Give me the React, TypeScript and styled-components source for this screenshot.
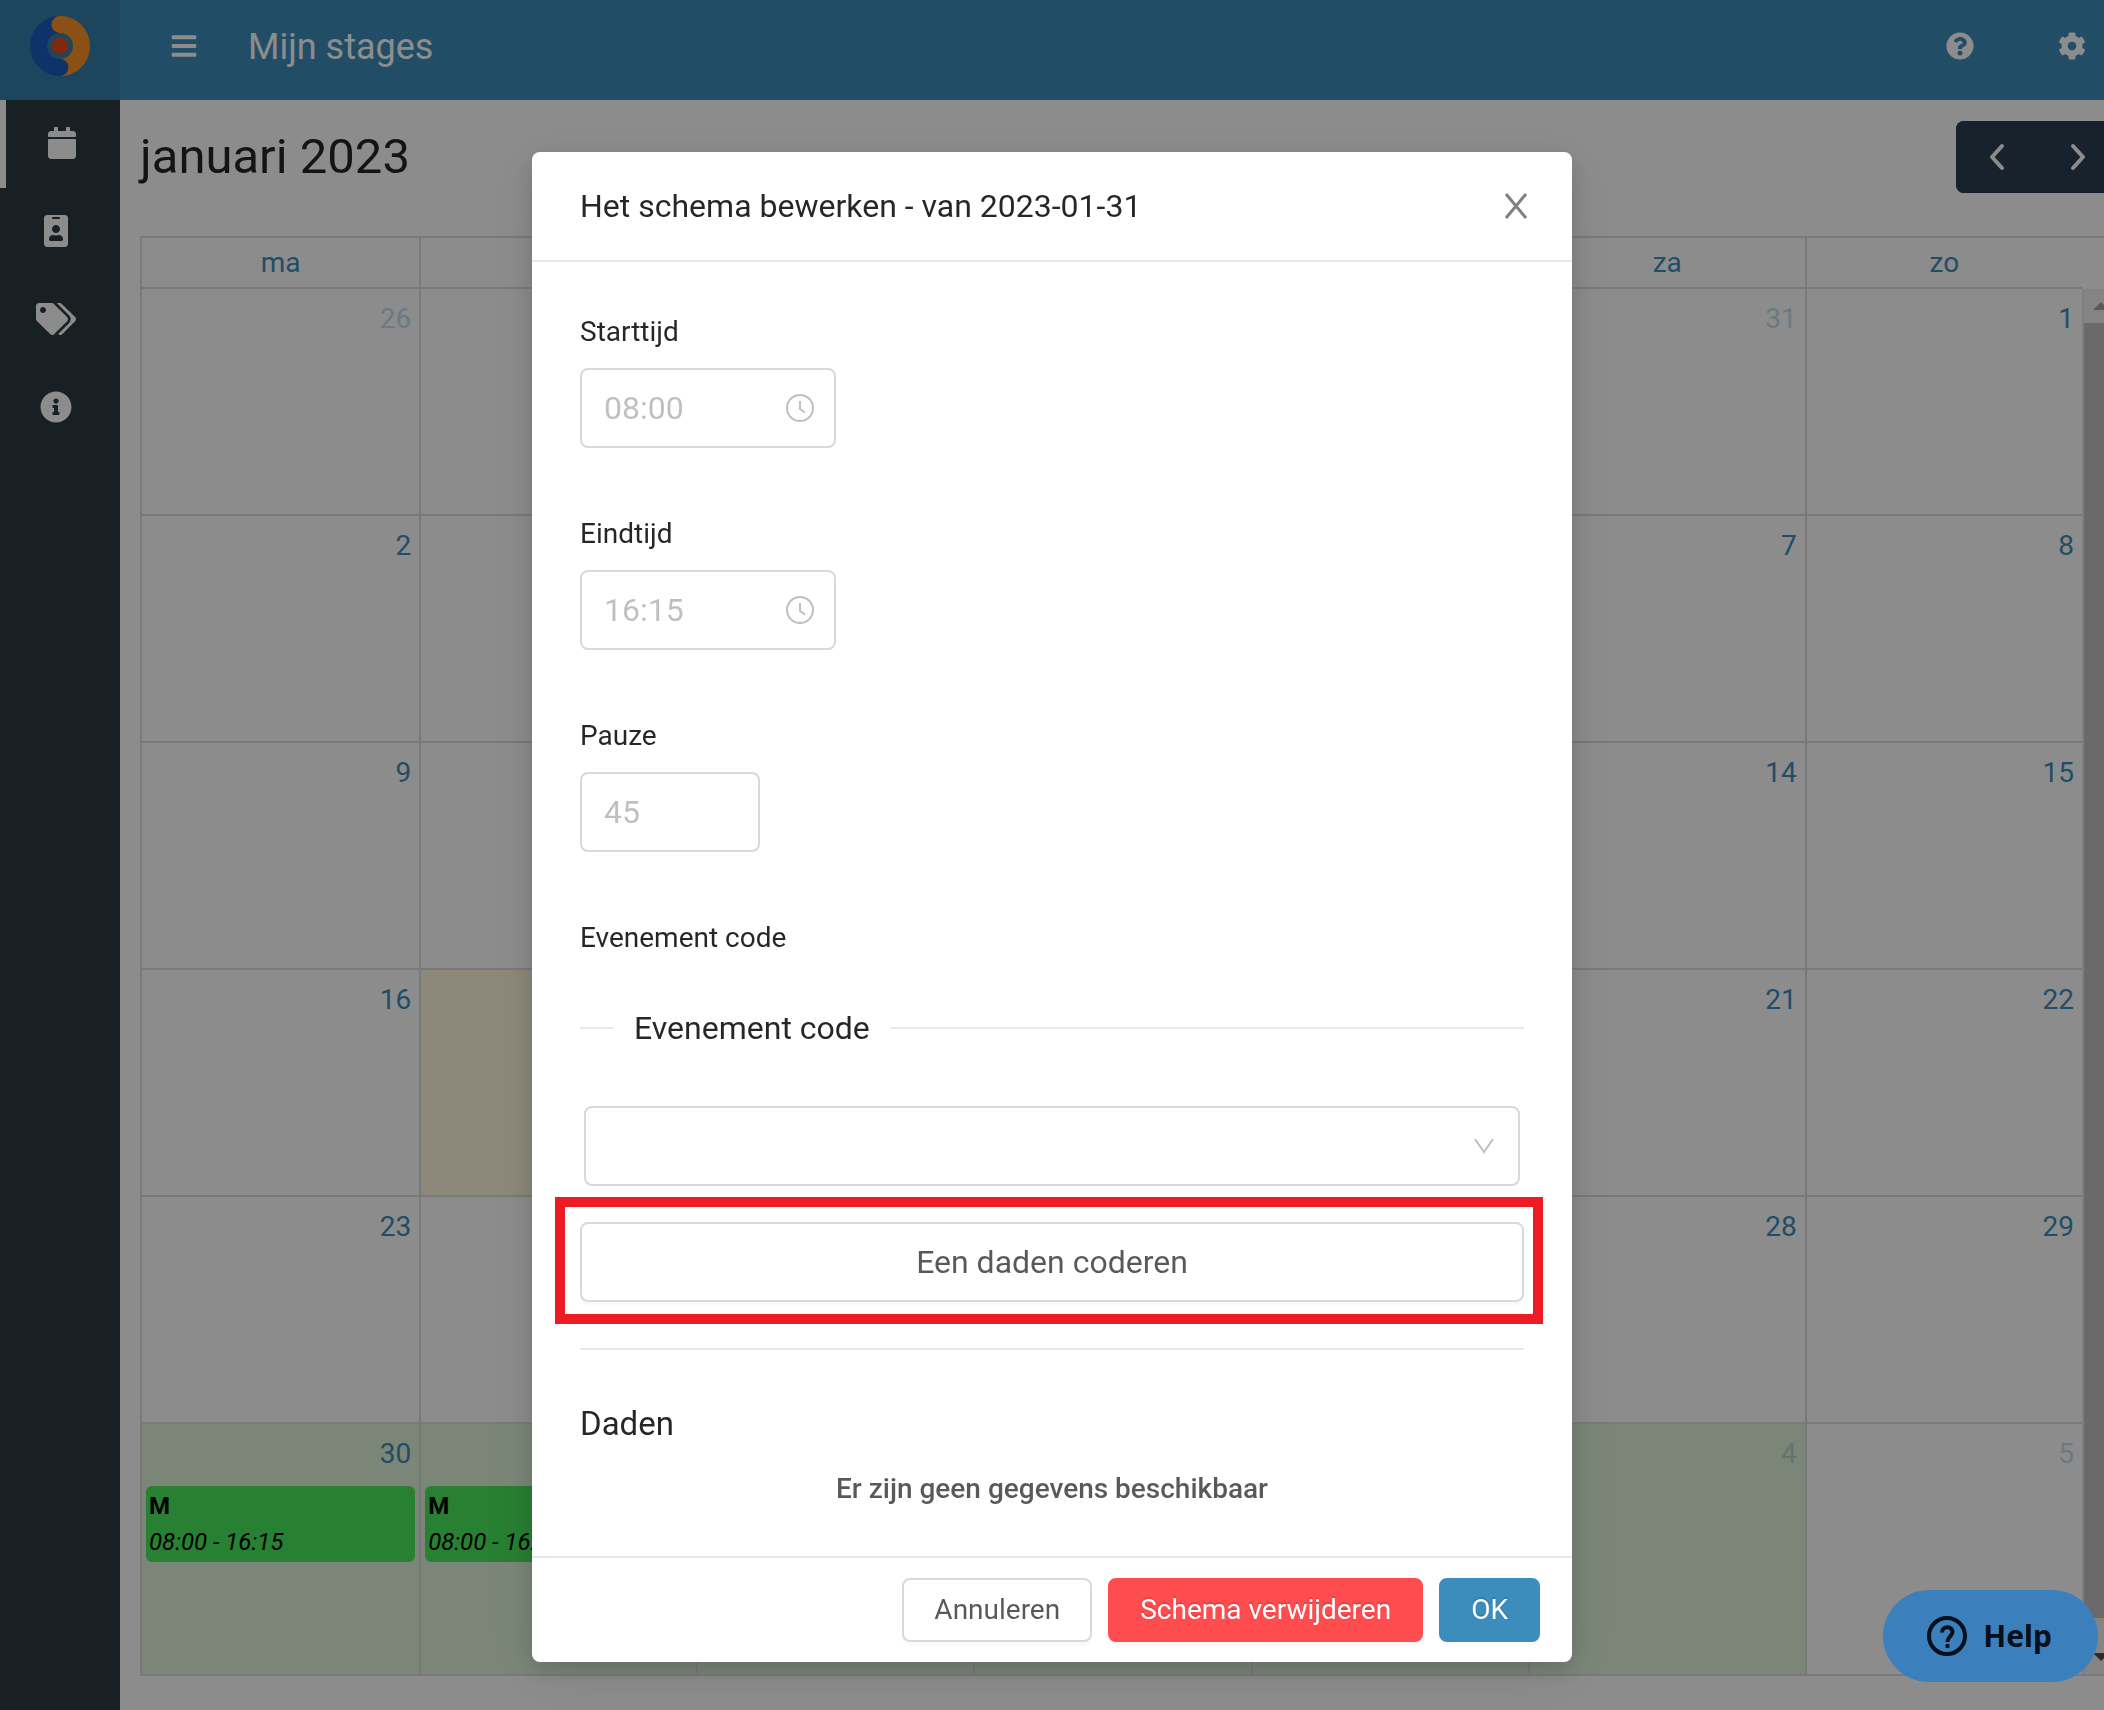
import React from 'react';
import styled, { createGlobalStyle } from 'styled-components';
import {
  FaBars,
  FaCalendar,
  FaCog,
  FaIdBadge,
  FaInfoCircle,
  FaQuestionCircle,
  FaTags,
} from 'react-icons/fa';

const GlobalStyle = createGlobalStyle`
  *, *::before, *::after { box-sizing: border-box; }
  html, body, #root { height: 100%; }
  body {
    margin: 0;
    overflow: hidden;
    background: #fff;
    color: rgba(0, 0, 0, 0.85);
    font-family: Roboto, "Liberation Sans", sans-serif;
    font-size: 28px;
    line-height: 42px;
  }
  button, input, select { font: inherit; color: inherit; margin: 0; }
  button { cursor: pointer; }
  a { text-decoration: none; color: inherit; }
`;

const Page = styled.div`
  display: flex;
  flex-direction: column;
  height: 100vh;
  overflow: hidden;
`;

const TopBar = styled.header`
  display: flex;
  align-items: center;
  flex: none;
  height: 100px;
  padding-right: 18px;
  background: #3c8dbc;
  color: #fff;
`;

const LogoCell = styled.a`
  display: flex;
  align-items: center;
  justify-content: center;
  width: 120px;
  height: 100%;
  padding-bottom: 8px;
  background: #367fa9;
`;

const IconButton = styled.button`
  display: flex;
  padding: 0;
  border: 0;
  background: none;
  color: #fff;
  font-size: 28px;
`;

const MenuSlot = styled.div`
  padding: 0 50px 8px;
`;

const PageTitle = styled.h1`
  flex: 1;
  margin: 0;
  padding-bottom: 6px;
  font-size: 36px;
  font-weight: 400;
`;

const TopActions = styled.div`
  display: flex;
  gap: 84px;
  padding-bottom: 8px;
`;

const Body = styled.div`
  display: flex;
  flex: 1;
  min-height: 0;
`;

const Sidebar = styled.nav`
  display: flex;
  flex-direction: column;
  flex: none;
  width: 120px;
  background: #2c3b41;
`;

const SideLink = styled.a<{ $active?: boolean; $wide?: boolean }>`
  display: flex;
  align-items: center;
  justify-content: center;
  height: 88px;
  padding: 0 ${(p) => (p.$active ? 2 : 8)}px 2px 0;
  border-left: ${(p) => (p.$active ? '6px solid #fff' : '0')};
  color: #fff;
  & > svg { width: ${(p) => (p.$wide ? 40 : 32)}px; height: 32px; }
`;

const Main = styled.main`
  display: flex;
  flex-direction: column;
  flex: 1;
  min-width: 0;
  margin-right: -14px;
  padding: 21px 0 34px 20px;
`;

const Toolbar = styled.div`
  display: flex;
  align-items: center;
  justify-content: space-between;
  height: 72px;
  margin-bottom: 43px;
`;

const MonthTitle = styled.h2`
  margin: 0;
  font-size: 49px;
  font-weight: 400;
`;

const NavGroup = styled.div`
  display: flex;
  overflow: hidden;
  border-radius: 8px;
  background: #2c3e50;
`;

const NavButton = styled.button`
  display: flex;
  align-items: center;
  justify-content: center;
  width: 81px;
  height: 72px;
  padding: 0;
  border: 0;
  background: #2c3e50;
  color: #fff;
`;

const CalendarFrame = styled.div`
  display: flex;
  flex-direction: column;
  flex: 1;
  min-height: 0;
  border: 2px solid #ddd;
  border-right: 0;
`;

const HeadTable = styled.div`
  flex: none;
  padding-right: 36px;
`;

const Scroller = styled.div`
  display: flex;
  flex: 1;
  min-height: 0;
  overflow: hidden;
`;

const MonthTable = styled.table`
  width: 100%;
  border-collapse: separate;
  border-spacing: 0;
  table-layout: fixed;
  align-self: flex-start;
`;

const DayName = styled.th`
  height: 51px;
  padding: 3px 0;
  border-bottom: 2px solid #ddd;
  color: #3c8dbc;
  font-weight: 400;
  text-align: center;
  & + & { border-left: 2px solid #ddd; }
`;

const DayCell = styled.td<{ $tone?: string; $last?: boolean }>`
  height: ${(p) => (p.$last ? 260 : 227)}px;
  padding: 0;
  vertical-align: top;
  border-bottom: 2px solid #ddd;
  background: ${(p) => p.$tone || 'transparent'};
  & + & { border-left: 2px solid #ddd; }
`;

const DayNumber = styled.a<{ $other?: boolean }>`
  display: block;
  padding: 9px 8px 7px;
  color: #3c8dbc;
  opacity: ${(p) => (p.$other ? 0.3 : 1)};
  text-align: right;
`;

const EventCard = styled.a`
  display: block;
  height: 76px;
  margin: 4px 4px 0;
  padding: 2px 3px;
  border-radius: 6px;
  background: #49e95c;
  color: #000;
  font-size: 24px;
  line-height: 36px;
`;

const EventCode = styled.strong`
  display: block;
  font-weight: 700;
`;

const EventTime = styled.em`
  display: block;
`;

const ScrollTrack = styled.div`
  display: flex;
  flex-direction: column;
  flex: none;
  width: 36px;
  border-left: 2px solid #e8e8e8;
  background: #f1f1f1;
`;

const ScrollArrow = styled.div`
  display: flex;
  align-items: center;
  justify-content: center;
  flex: none;
  height: 34px;
`;

const ScrollThumb = styled.div`
  flex: 1;
  margin-bottom: 22px;
  background: #c1c1c1;
`;

const Overlay = styled.div`
  position: fixed;
  inset: 0;
  display: flex;
  align-items: flex-start;
  justify-content: center;
  padding-top: 152px;
  background: rgba(0, 0, 0, 0.45);
`;

const Dialog = styled.section`
  width: 1040px;
  max-width: calc(100vw - 64px);
  border-radius: 8px;
  background: #fff;
  box-shadow: 0 8px 24px 0 rgba(0, 0, 0, 0.15), 0 12px 64px 0 rgba(0, 0, 0, 0.08);
`;

const DialogHeader = styled.div`
  display: flex;
  align-items: center;
  justify-content: space-between;
  height: 110px;
  padding: 0 40px 0 48px;
  border-bottom: 2px solid #e8e8e8;
`;

const DialogTitle = styled.h2`
  margin: 0;
  font-size: 32px;
  font-weight: 400;
  line-height: 44px;
`;

const CloseButton = styled.button`
  display: flex;
  padding: 0;
  border: 0;
  background: none;
  color: rgba(0, 0, 0, 0.5);
`;

const DialogBody = styled.div`
  padding: 48px 48px 46px;
`;

const Field = styled.div`
  margin-bottom: 64px;
`;

const Label = styled.label`
  display: block;
  margin-bottom: 14px;
  line-height: 44px;
`;

const InputBox = styled.div<{ $width: number }>`
  display: flex;
  align-items: center;
  width: ${(p) => p.$width}px;
  height: 80px;
  padding: 0 20px 0 22px;
  border: 2px solid #d9d9d9;
  border-radius: 8px;
  color: rgba(0, 0, 0, 0.25);
`;

const TextInput = styled.input`
  flex: 1;
  min-width: 0;
  width: 100%;
  padding: 0;
  border: 0;
  outline: 0;
  background: none;
  font-size: 32px;
`;

const SectionTitle = styled.div`
  display: flex;
  align-items: center;
  gap: 20px;
  margin: 46px 0 56px;
  font-size: 32px;
  line-height: 44px;
  &::before, &::after {
    content: "";
    width: 34px;
    height: 2px;
    background: #e8e8e8;
  }
  &::after { flex: 1; }
`;

const SelectBox = styled.div`
  display: grid;
  align-items: center;
  margin: 0 4px 36px;
  & > * { grid-area: 1 / 1; }
  & > svg { justify-self: end; margin-right: 24px; pointer-events: none; }
`;

const Select = styled.select`
  width: 100%;
  height: 80px;
  padding: 0 22px;
  border: 2px solid #d9d9d9;
  border-radius: 8px;
  background: #fff;
  appearance: none;
  font-size: 32px;
`;

const Highlight = styled.div`
  position: relative;
  &::after {
    content: "";
    position: absolute;
    inset: -25px -19px -22px -25px;
    border: 10px solid #ed1c24;
    pointer-events: none;
  }
`;

const Button = styled.button<{ $tone?: string; $block?: boolean }>`
  display: block;
  width: ${(p) => (p.$block ? '100%' : 'auto')};
  height: ${(p) => (p.$block ? 80 : 64)}px;
  padding: 0 30px;
  border: 2px solid ${(p) => p.$tone || '#d9d9d9'};
  border-radius: 8px;
  background: ${(p) => p.$tone || '#fff'};
  color: ${(p) => (p.$tone ? '#fff' : 'rgba(0, 0, 0, 0.65)')};
  font-size: ${(p) => (p.$block ? 32 : 28)}px;
  line-height: 42px;
  text-shadow: ${(p) => (p.$tone ? '0 -2px 0 rgba(0, 0, 0, 0.12)' : 'none')};
  box-shadow: 0 4px 0 rgba(0, 0, 0, 0.02);
`;

const Rule = styled.hr`
  height: 2px;
  margin: 46px 0 50px;
  border: 0;
  background: #e8e8e8;
`;

const SubTitle = styled.h3`
  margin: 0 0 20px;
  font-size: 33px;
  font-weight: 400;
  line-height: 48px;
`;

const EmptyText = styled.p`
  margin: 0;
  color: rgba(0, 0, 0, 0.65);
  font-weight: 500;
  text-align: center;
`;

const DialogFooter = styled.div`
  display: flex;
  justify-content: flex-end;
  gap: 16px;
  padding: 20px 32px;
  border-top: 2px solid #e8e8e8;
`;

const HelpButton = styled.button`
  position: fixed;
  right: 6px;
  bottom: 28px;
  display: flex;
  align-items: center;
  gap: 16px;
  height: 92px;
  padding: 0 46px 0 44px;
  border: 0;
  border-radius: 46px;
  background: #3b7fbd;
  color: #05101a;
  font-family: "Noto Sans", "Open Sans", sans-serif;
  font-size: 30px;
  font-weight: 700;
`;

const Logo = () => (
  <svg width="60" height="60" viewBox="0 0 60 60" fill="none" strokeWidth="17" aria-hidden="true">
    <path d="M30 8.500 A21.500 21.500 0 0 0 30 51.500" stroke="#1a5bbf" />
    <path d="M30 8.500 A21.500 21.500 0 0 1 30 51.500" stroke="#fd9426" />
    <circle cx="30" cy="8.500" r="8.500" fill="#fd9426" stroke="none" />
    <circle cx="30" cy="51.500" r="8.500" fill="#1a5bbf" stroke="none" />
    <circle cx="30" cy="30" r="8.500" fill="#e84a1e" stroke="none" />
  </svg>
);

const Chevron = ({ flip }: { flip?: boolean }) => (
  <svg width="16" height="28" viewBox="0 0 16 28" fill="none" stroke="currentColor" strokeWidth="4" strokeLinecap="round" strokeLinejoin="round" aria-hidden="true">
    <path d={flip ? 'M3 3 L13 14 L3 25' : 'M13 3 L3 14 L13 25'} />
  </svg>
);

const ClockIcon = () => (
  <svg width="28" height="28" viewBox="0 0 28 28" fill="none" stroke="currentColor" strokeWidth="2" aria-hidden="true">
    <circle cx="14" cy="14" r="13" />
    <path d="M14 7 V15 L19 18.500" />
  </svg>
);

const CloseIcon = () => (
  <svg width="32" height="32" viewBox="0 0 32 32" fill="none" stroke="currentColor" strokeWidth="3" aria-hidden="true">
    <path d="M6 4 L26 28 M26 4 L6 28" />
  </svg>
);

const DownIcon = () => (
  <svg width="24" height="24" viewBox="0 0 24 24" fill="none" stroke="rgba(0,0,0,0.25)" strokeWidth="2" aria-hidden="true">
    <path d="M3 5 L12 18 L21 5" />
  </svg>
);

const Triangle = ({ down }: { down?: boolean }) => (
  <svg width="16" height="8" viewBox="0 0 16 8" aria-hidden="true">
    <path d={down ? 'M0 0 H16 L8 8 Z' : 'M0 8 H16 L8 0 Z'} fill={down ? '#505050' : '#a3a3a3'} />
  </svg>
);

const HelpIcon = () => (
  <svg width="40" height="40" viewBox="0 0 40 40" fill="none" stroke="currentColor" strokeWidth="4" aria-hidden="true">
    <circle cx="20" cy="20" r="18" />
    <path d="M15 16.500 C15 9.500 25.500 9.500 25.500 16 C25.500 20 20.500 20.500 20.500 26" />
    <circle cx="20.500" cy="30" r="2.200" fill="currentColor" stroke="none" />
  </svg>
);

const DAY_NAMES = ['ma', 'di', 'wo', 'do', 'vr', 'za', 'zo'];

const WEEKS = [
  [26, 27, 28, 29, 30, 31, 1],
  [2, 3, 4, 5, 6, 7, 8],
  [9, 10, 11, 12, 13, 14, 15],
  [16, 17, 18, 19, 20, 21, 22],
  [23, 24, 25, 26, 27, 28, 29],
  [30, 31, 1, 2, 3, 4, 5],
];

const isOtherMonth = (week: number, day: number) =>
  (week === 0 && day > 20) || (week === 5 && day < 20);

const cellTone = (week: number, column: number) => {
  if (week === 5 && column < 6) return '#e0f5dc';
  if (week === 3 && column === 1) return '#fffadf';
  return undefined;
};

const App = () => (
  <>
    <GlobalStyle />
    <Page>
      <TopBar>
        <LogoCell href="#" aria-label="Start"><Logo /></LogoCell>
        <MenuSlot>
          <IconButton type="button" aria-label="Menu"><FaBars /></IconButton>
        </MenuSlot>
        <PageTitle>Mijn stages</PageTitle>
        <TopActions>
          <IconButton type="button" aria-label="Hulp"><FaQuestionCircle /></IconButton>
          <IconButton type="button" aria-label="Instellingen"><FaCog /></IconButton>
        </TopActions>
      </TopBar>
      <Body>
        <Sidebar>
          <SideLink href="#" $active aria-label="Kalender"><FaCalendar /></SideLink>
          <SideLink href="#" aria-label="Profiel"><FaIdBadge /></SideLink>
          <SideLink href="#" $wide aria-label="Labels"><FaTags /></SideLink>
          <SideLink href="#" aria-label="Informatie"><FaInfoCircle /></SideLink>
        </Sidebar>
        <Main>
          <Toolbar>
            <MonthTitle>januari 2023</MonthTitle>
            <NavGroup>
              <NavButton type="button" aria-label="Vorige maand"><Chevron /></NavButton>
              <NavButton type="button" aria-label="Volgende maand"><Chevron flip /></NavButton>
            </NavGroup>
          </Toolbar>
          <CalendarFrame>
            <HeadTable>
              <MonthTable>
                <thead>
                  <tr>{DAY_NAMES.map((name) => <DayName key={name} scope="col">{name}</DayName>)}</tr>
                </thead>
              </MonthTable>
            </HeadTable>
            <Scroller>
              <MonthTable>
                <tbody>
                  {WEEKS.map((days, week) => (
                    <tr key={week}>
                      {days.map((day, column) => (
                        <DayCell key={column} $tone={cellTone(week, column)} $last={week === 5}>
                          <DayNumber href="#" $other={isOtherMonth(week, day)}>{day}</DayNumber>
                          {week === 5 && column < 2 && (
                            <EventCard href="#">
                              <EventCode>M</EventCode>
                              <EventTime>08:00 - 16:15</EventTime>
                            </EventCard>
                          )}
                        </DayCell>
                      ))}
                    </tr>
                  ))}
                </tbody>
              </MonthTable>
              <ScrollTrack>
                <ScrollArrow><Triangle /></ScrollArrow>
                <ScrollThumb />
                <ScrollArrow><Triangle down /></ScrollArrow>
              </ScrollTrack>
            </Scroller>
          </CalendarFrame>
        </Main>
      </Body>
    </Page>
    <Overlay>
      <Dialog role="dialog" aria-labelledby="dialog-title">
        <DialogHeader>
          <DialogTitle id="dialog-title">Het schema bewerken - van 2023-01-31</DialogTitle>
          <CloseButton type="button" aria-label="Sluiten"><CloseIcon /></CloseButton>
        </DialogHeader>
        <DialogBody>
          <Field>
            <Label htmlFor="start">Starttijd</Label>
            <InputBox $width={256}>
              <TextInput id="start" defaultValue="08:00" />
              <ClockIcon />
            </InputBox>
          </Field>
          <Field>
            <Label htmlFor="end">Eindtijd</Label>
            <InputBox $width={256}>
              <TextInput id="end" defaultValue="16:15" />
              <ClockIcon />
            </InputBox>
          </Field>
          <Field>
            <Label htmlFor="pause">Pauze</Label>
            <InputBox $width={180}>
              <TextInput id="pause" defaultValue="45" />
            </InputBox>
          </Field>
          <Label htmlFor="code">Evenement code</Label>
          <SectionTitle>Evenement code</SectionTitle>
          <SelectBox>
            <Select id="code" defaultValue=""><option value="" /></Select>
            <DownIcon />
          </SelectBox>
          <Highlight>
            <Button type="button" $block>Een daden coderen</Button>
          </Highlight>
          <Rule />
          <SubTitle>Daden</SubTitle>
          <EmptyText>Er zijn geen gegevens beschikbaar</EmptyText>
        </DialogBody>
        <DialogFooter>
          <Button type="button">Annuleren</Button>
          <Button type="button" $tone="#ff4d4f">Schema verwijderen</Button>
          <Button type="button" $tone="#3c8dbc">OK</Button>
        </DialogFooter>
      </Dialog>
    </Overlay>
    <HelpButton type="button"><HelpIcon />Help</HelpButton>
  </>
);

export default App;
